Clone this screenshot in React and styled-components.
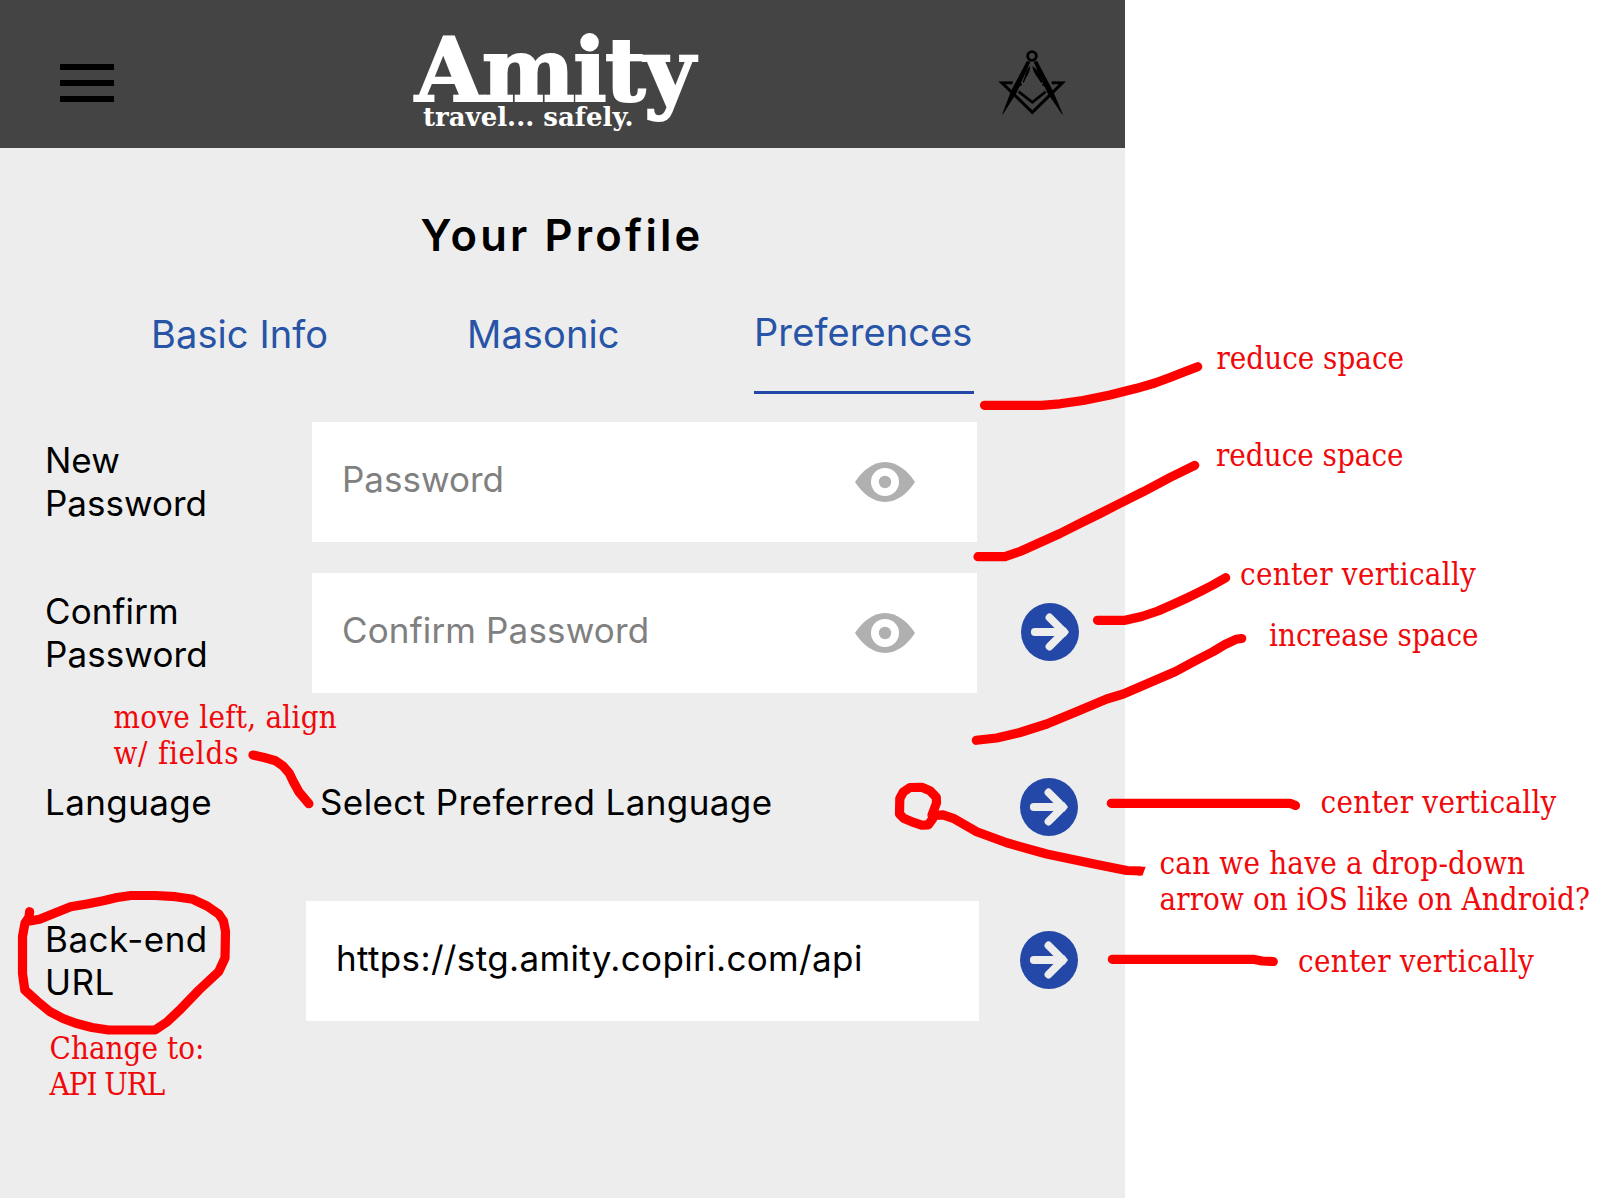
import React from "react";
import styled, { createGlobalStyle } from "styled-components";

const RED = "#ff0000";
const BLUE = "#2448a8";

const GlobalStyle = createGlobalStyle`
  * { box-sizing: border-box; }
  body { margin: 0; background: #fff; overflow: hidden; }
`;

const Board = styled.div`
  position: relative;
  width: 1612px;
  height: 1198px;
  background: #fff;
  font-family: Inter, "Liberation Sans", sans-serif;
  color: #000;
`;

const Phone = styled.main`
  width: 1125px;
  height: 1198px;
  background: #ededed;
`;

const Header = styled.header`
  display: grid;
  grid-template-columns: 355px 1fr 84px;
  height: 148px;
  padding: 0 51px 0 60px;
  background: #444;
`;

const MenuButton = styled.div`
  display: flex;
  flex-direction: column;
  gap: 10px;
  width: 54px;
  padding-top: 64px;
`;

const MenuBar = styled.span`
  height: 6px;
  background: #000;
`;

const Logo = styled.div`
  padding-top: 37px;
  font-family: "DejaVu Serif", serif;
  font-weight: 700;
  color: #fff;
  white-space: nowrap;
`;

const LogoName = styled.div`
  font-size: 88px;
  line-height: 66px;
  letter-spacing: -1.6px;
  -webkit-text-stroke: 2px #fff;
`;

const LogoTagline = styled.div`
  margin-left: 8px;
  font-size: 26px;
  line-height: 28px;
`;

const Emblem = styled.svg`
  width: 84px;
  height: 84px;
  margin-top: 40px;
`;

const Title = styled.h1`
  margin: 60px 0 0;
  padding-left: 420.5px;
  font-size: 43.5px;
  line-height: 54px;
  font-weight: 600;
  letter-spacing: 3.2px;
  white-space: nowrap;
`;

const Tabs = styled.nav`
  display: grid;
  grid-template-columns: 316px 287px 220px;
  height: 85px;
  margin-top: 47px;
  padding-left: 151px;
`;

const Tab = styled.div`
  padding-top: ${(p) => (p.$active ? 0 : 2)}px;
  border-bottom: ${(p) => (p.$active ? `3px solid ${BLUE}` : "0")};
  font-size: 38px;
  line-height: 46px;
  letter-spacing: 0.1px;
  color: #2754a6;
  white-space: nowrap;
`;

const Form = styled.div`
  padding: 28px 0 0 45px;
`;

const Row = styled.div`
  display: grid;
  grid-template-columns: 267px 665px 1fr;
  align-items: center;
  height: ${(p) => p.$height || 120}px;
  margin-bottom: ${(p) => p.$gap || 0}px;
`;

const Label = styled.div`
  font-size: 35px;
  line-height: 43px;
  letter-spacing: ${(p) => p.$track || 0}px;
`;

const Field = styled.div`
  display: flex;
  align-items: center;
  justify-content: space-between;
  height: 120px;
  margin: ${(p) => (p.$wide ? "0 -2px 0 -6px" : "0")};
  padding: 0 62px 0 30px;
  background: #fff;
`;

const FieldText = styled.span`
  padding-bottom: 5px;
  font-size: 35px;
  line-height: 43px;
  letter-spacing: ${(p) => p.$track || 0}px;
  color: ${(p) => (p.$filled ? "#000" : "#808080")};
  white-space: nowrap;
`;

const Select = styled.div`
  padding-left: 8px;
  font-size: 35px;
  line-height: 43px;
  letter-spacing: 0.4px;
  white-space: nowrap;
`;

const EyeIcon = styled.svg`
  width: 60px;
  height: 42px;
`;

const SubmitIcon = styled.svg`
  width: 58px;
  height: 58px;
  margin: ${(p) => p.$shift}px 0 0 ${(p) => p.$left || 43}px;
`;

const Ink = styled.svg`
  position: absolute;
  inset: 0;
  width: 1612px;
  height: 1198px;
  fill: none;
  stroke: ${RED};
  stroke-width: 9.2;
  stroke-linecap: round;
  stroke-linejoin: round;
  pointer-events: none;
`;

const Note = styled.div`
  position: absolute;
  left: ${(p) => p.$x}px;
  top: ${(p) => p.$y}px;
  font-family: "DejaVu Serif Condensed", "DejaVu Serif", serif;
  font-stretch: condensed;
  font-size: 31px;
  line-height: 36px;
  color: #f0080a;
  white-space: nowrap;
`;

const NoteLine = styled.div`
  letter-spacing: ${(p) => p.$track || 0}px;
`;

const notes = [
  { x: 113.5, y: 699, lines: [["move left, align", 0.27], ["w/ fields", 0.75]] },
  { x: 49.5, y: 1030, lines: [["Change to:", 0.05], ["API URL", -1]] },
  { x: 1216.5, y: 340, lines: [["reduce space", 0]] },
  { x: 1216, y: 437, lines: [["reduce space", 0]] },
  { x: 1240, y: 556, lines: [["center vertically", 0.27]] },
  { x: 1269, y: 617, lines: [["increase space", 0]] },
  { x: 1320.5, y: 784, lines: [["center vertically", 0.27]] },
  { x: 1159.5, y: 845, lines: [["can we have a drop-down", 0.2], ["arrow on iOS like on Android?", 0.1]] },
  { x: 1298, y: 943, lines: [["center vertically", 0.27]] },
];

const strokes = [
  "984.5 405.3 1041.7 405.3 1060 403.8 1083 400.5 1110 395 1136.7 388.3 1155 383 1170 377.5 1184 372 1197.7 366.7",
  "978 556.7 1005 556.7 1020 551.5 1040 542.5 1060 533.5 1080 523.3 1100 513.5 1116.7 505 1143.3 491.7 1170 477.5 1194.7 465.3",
  "1097.5 620.3 1125 620.3 1141.7 616.5 1158 611 1173.3 604.3 1187 598 1200 591.7 1212 585.5 1225.7 577.7",
  "976.3 740.3 996.7 738 1020 732.5 1046.7 724 1077 711.5 1106.7 699 1123.3 694 1150 682.5 1175 671.7 1195 661 1213.3 651.5 1225 644.5 1236 639.3 1241.7 638.5",
  "1111.3 803.3 1290 803.3 1295.5 805.5",
  "1112.3 959.3 1253.3 959.3 1262 961 1273.3 961.5",
  "253 755 264 757.5 275.5 760.7 283 766 289.3 773.3 293.5 782 299 792 308.9 803.7",
  "29.6 911.7 29 917 25 923 22.5 936.7 22.5 973.3 24.8 990 37 1001 50 1011.7 63 1018.5 75.8 1023.3 92 1027.5 108.5 1030 155 1030 167 1022 179 1010.7 199 990 218.7 971.7 225 958 225.5 931.7 223.5 921 218.7 914 207 906 192.8 899.3 175.6 896.7 155 895.5 130.9 895.5 117 897.5 103.3 900.7 87 904 70.6 906.7 55 913 39.6 919.3 30 921",
  "932 815 936.5 803 936.3 797.3 930 790.7 921.7 787.3 910 787.5 903.3 792 899.8 798.5 899.5 814 904 818.5 912 821.8 921.7 825.2 928.3 824.8 933 818.3 932 815",
];

function Eye() {
  return (
    <EyeIcon viewBox="-30 -21 60 42" fill="#b0b0b0">
      <path d="M-30 0C-23-11-12-20 0-20S23-11 30 0C23 11 12 20 0 20S-23 11-30 0Z" />
      <circle r="14" fill="#fff" />
      <circle r="6.2" />
    </EyeIcon>
  );
}

function Submit({ shift = 0, left }) {
  return (
    <SubmitIcon $shift={shift} $left={left} viewBox="-29 -29 58 58">
      <circle r="29" fill={BLUE} />
      <path
        d="M-15.2 0H12M-.5-14.5 14 0-.5 14.5"
        fill="none"
        stroke="#ededed"
        strokeWidth="7.8"
        strokeLinecap="round"
        strokeLinejoin="round"
      />
      <path d="M15 -5 19 0 15 5Z" fill="#ededed" />
    </SubmitIcon>
  );
}

function SquareAndCompasses() {
  return (
    <Emblem viewBox="0 0 252 252">
      <circle cx="126" cy="48" r="13" fill="none" stroke="#000" strokeWidth="8.5" />
      <path d="M111 62 121 66 80 158 37 226 38 219 64 151Z" />
      <path d="M141 62 131 66 172 158 218 226 217 219 188 151Z" />
      <path d="M120 78C111 88 106 96 105 108L98 126 101 129 109 112C116 102 121 90 120 78Z" />
      <path d="M127 78C139 86 149 98 152 112L158 127 153 129 144 115C135 103 128 91 127 78Z" />
      <path
        d="M86 155 127 187 167 155"
        fill="none"
        stroke="#000"
        strokeWidth="8"
      />
      <path
        d="M68 128 36 128.500 127 217 217 128.500 185 128M94 131 84 137M158 131 168 137"
        fill="none"
        stroke="#000"
        strokeWidth="9"
      />
    </Emblem>
  );
}

export default function App() {
  return (
    <>
      <GlobalStyle />
      <Board>
        <Phone>
          <Header>
            <MenuButton>
              <MenuBar />
              <MenuBar />
              <MenuBar />
            </MenuButton>
            <Logo>
              <LogoName>Amity</LogoName>
              <LogoTagline>travel... safely.</LogoTagline>
            </Logo>
            <SquareAndCompasses />
          </Header>
          <Title>Your Profile</Title>
          <Tabs>
            <Tab>Basic Info</Tab>
            <Tab>Masonic</Tab>
            <Tab $active>Preferences</Tab>
          </Tabs>
          <Form>
            <Row $gap={31}>
              <Label>New<br />Password</Label>
              <Field>
                <FieldText>Password</FieldText>
                <Eye />
              </Field>
            </Row>
            <Row $gap={65}>
              <Label $track={0.1}>Confirm<br />Password</Label>
              <Field>
                <FieldText $track={0.15}>Confirm Password</FieldText>
                <Eye />
              </Field>
              <Submit shift={-2} left={44} />
            </Row>
            <Row $height={88} $gap={55}>
              <Label $track={0.4}>Language</Label>
              <Select>Select Preferred Language</Select>
              <Submit shift={10} />
            </Row>
            <Row>
              <Label $track={0.5}>Back-end<br />URL</Label>
              <Field $wide>
                <FieldText $filled $track={0.36}>https://stg.amity.copiri.com/api</FieldText>
              </Field>
              <Submit shift={-3} />
            </Row>
          </Form>
        </Phone>
        <Ink viewBox="0 0 1612 1198">
          {strokes.map((points) => (
            <polyline key={points} points={points} />
          ))}
          <path
            d="M933 815.500 943 814.800 953.300 818.300 976.700 831.700 1006.700 842.800 1046.700 854 1096.700 864.500 1126.700 870.500 1141 871"
            strokeLinecap="butt"
          />
          <path d="M1138 866.700H1145.700L1142.500 875.500H1138Z" fill={RED} stroke="none" />
        </Ink>
        {notes.map((n) => (
          <Note key={`${n.x}-${n.y}`} $x={n.x} $y={n.y}>
            {n.lines.map(([text, track]) => (
              <NoteLine key={text} $track={track}>{text}</NoteLine>
            ))}
          </Note>
        ))}
      </Board>
    </>
  );
}
